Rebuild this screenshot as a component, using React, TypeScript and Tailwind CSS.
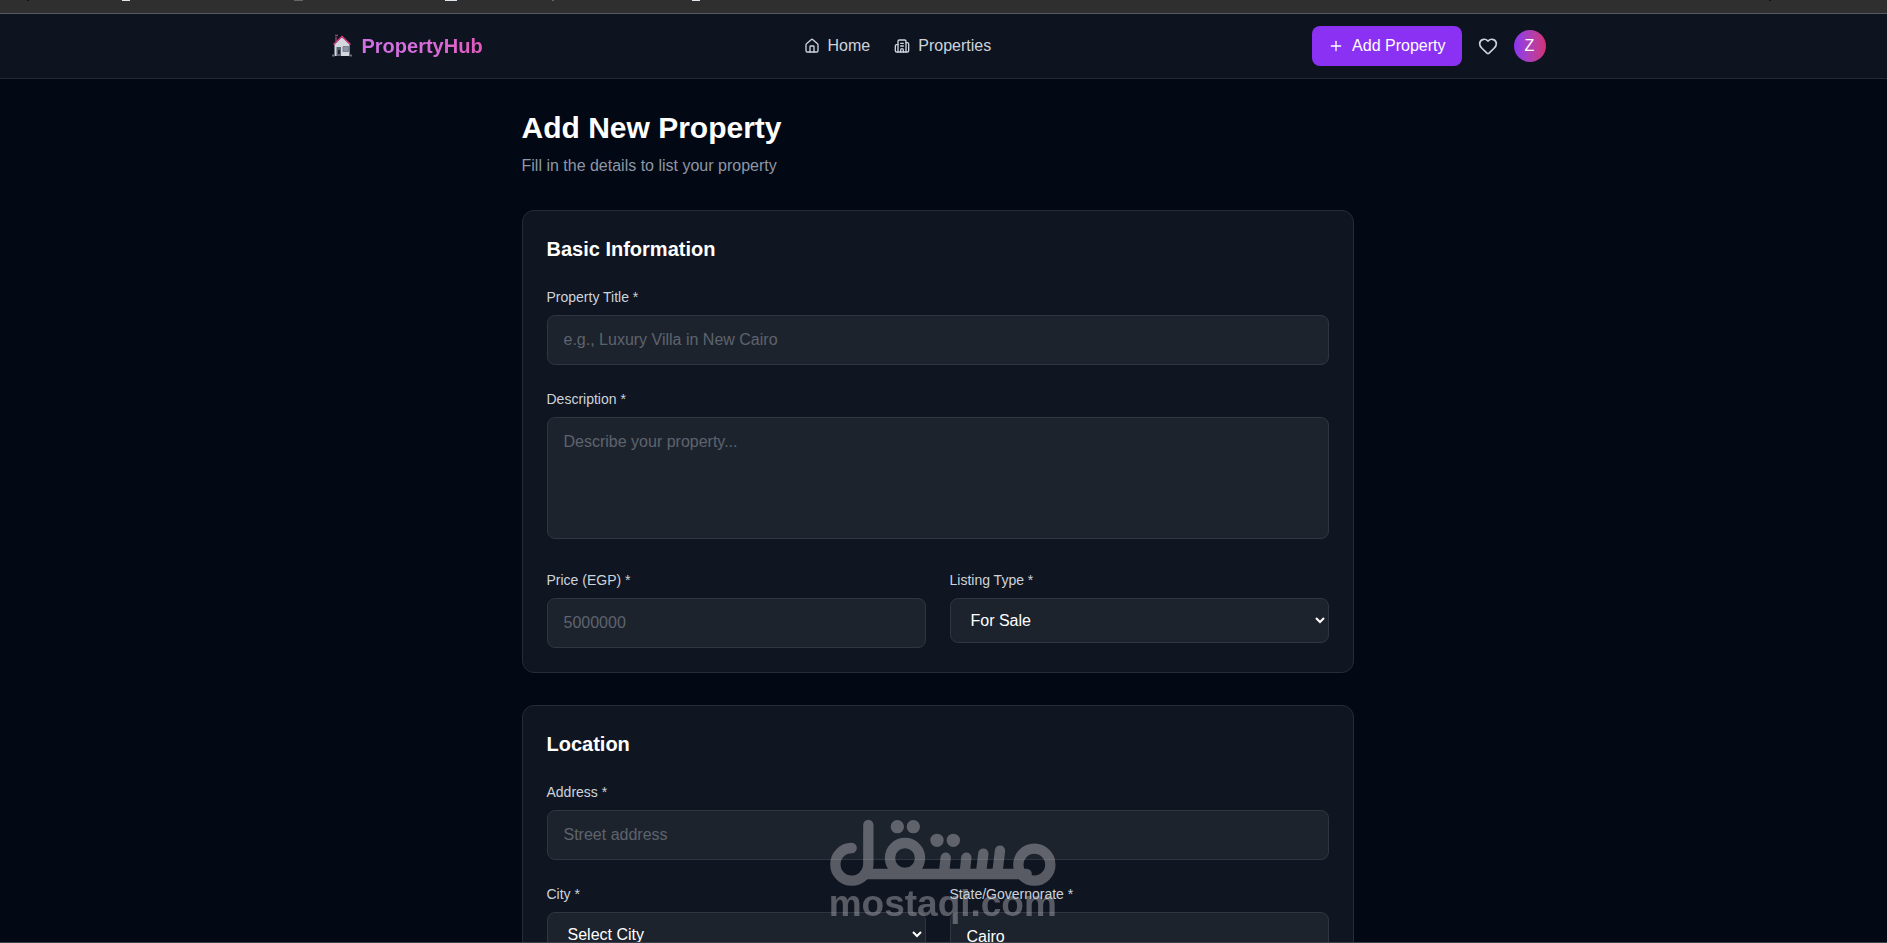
import { Building2, Heart, House, Plus } from "lucide-react";
import type { ReactNode } from "react";

const fieldClass =
  "w-full px-4 py-3 bg-[#1d232d] border border-[#30353f] rounded-lg text-white placeholder:text-[#5d636e] focus:outline-none focus:border-purple-500";

function Field({ id, label, children }: { id: string; label: string; children: ReactNode }) {
  return (
    <div>
      <label htmlFor={id} className="block text-sm text-[#ced3db] mb-2">{label} *</label>
      {children}
    </div>
  );
}

function Section({ title, children }: { title: string; children: ReactNode }) {
  return (
    <section className="bg-[#101621] border border-[#262c36] rounded-xl p-6">
      <h2 className="text-xl font-bold text-white mb-6">{title}</h2>
      <div className="space-y-6">{children}</div>
    </section>
  );
}

function HouseLogo() {
  return (
    <svg viewBox="0 0 24 24" className="w-6 h-6" aria-hidden="true">
      <path d="M5 1.5h3M6 3v4.5" stroke="#8f4c68" strokeWidth="1.4" />
      <path d="M4.5 10.5 12 3l7.5 7.5V22h-15z" fill="#d5d7df" />
      <path d="M3.5 10.5 12 2.5l8.5 8" fill="none" stroke="#d63c80" strokeWidth="1.4" />
      <path d="M6.5 13h4.5v9H6.500z" fill="#5a6070" />
      <path d="M8 16h2v4H8z" fill="#22252e" />
      <path d="M13 12.500h5.500v5H13z" fill="#8b94a5" stroke="#6c7484" strokeWidth="0.8" />
      <path d="M2 21.500h3M19.500 21.500h2.500" stroke="#656c79" strokeWidth="1.8" />
    </svg>
  );
}

function Navbar() {
  return (
    <header className="bg-[#0d1420] border-b border-[#232a35] pr-3">
      <div className="max-w-7xl mx-auto px-8 h-16 flex items-center justify-between">
        <a href="#" className="flex items-center gap-2">
          <HouseLogo />
          <span className="text-xl font-bold bg-gradient-to-r from-[#d070e2] via-[#d86ddc] to-[#e25abb] bg-clip-text text-transparent">
            PropertyHub
          </span>
        </a>
        <nav className="flex items-center gap-6 text-[#ced3db]">
          <a href="#" className="flex items-center gap-2"><House size={16} /> Home</a>
          <a href="#" className="flex items-center gap-2"><Building2 size={16} /> Properties</a>
        </nav>
        <div className="flex items-center gap-4">
          <button type="button" className="flex items-center gap-2 px-4 py-2 rounded-lg bg-[#8b31f3] text-white">
            <Plus size={16} /> Add Property
          </button>
          <a href="#" aria-label="Favorites" className="text-[#ced3db]"><Heart size={20} /></a>
          <button type="button" className="w-8 h-8 rounded-full bg-gradient-to-r from-[#8b31f3] to-[#d22d74] text-white">
            Z
          </button>
        </div>
      </div>
    </header>
  );
}

// bottom edge of the browser toolbar
function BrowserEdge() {
  return (
    <div className="h-[14px] bg-[#2f2f2f] border-b border-[#565a5c]">
      <svg width="1887" height="1" className="block" aria-hidden="true">
        <path d="M27 .5h2M1769 .5h2" stroke="#111" />
        <path d="M122 .5h8M445 .5h12M692 .5h8" stroke="#dfe5ec" />
        <path d="M294 .5h9M552 .5h2" stroke="#666" />
      </svg>
    </div>
  );
}

function Watermark() {
  return (
    <div className="absolute inset-x-0 bottom-[18px] pr-[2px] flex justify-center pointer-events-none opacity-40">
      <svg viewBox="84 85 690 321" width="230" height="107" aria-hidden="true">
        <g fill="none" stroke="#c4c3c8" strokeWidth="31" strokeLinecap="round">
          <path d="M155 175a49 49 0 0 0 0 98a50 50 0 0 0 50-50V106" />
          <path d="M195 253H680" />
          <circle cx="315" cy="205" r="45" />
          <path d="M437 204l-5 46M499 204l-5 46M550 192l-7 58M600 183l-8 67" />
          <circle cx="703" cy="225" r="48" />
        </g>
        <g fill="#c4c3c8">
          <circle cx="292" cy="111" r="20" />
          <circle cx="340" cy="111" r="20" />
          <circle cx="411" cy="152" r="20" />
          <circle cx="460" cy="152" r="20" />
          <text x="86" y="379" fontSize="111" className="font-['Liberation_Sans',Arial,sans-serif] font-bold">mostaql.com</text>
        </g>
      </svg>
    </div>
  );
}

export default function App() {
  return (
    <div className="relative h-screen overflow-hidden bg-[#020814] font-['Liberation_Sans',Arial,sans-serif]">
      <BrowserEdge />
      <Navbar />
      <main className="pr-3">
        <div className="max-w-4xl mx-auto px-8 pt-[31px] pb-8">
          <h1 className="text-3xl font-bold text-white mb-2">Add New Property</h1>
          <p className="text-[#8f97a5] mb-8">Fill in the details to list your property</p>

          <form className="space-y-8">
            <Section title="Basic Information">
              <Field id="title" label="Property Title">
                <input id="title" type="text" placeholder="e.g., Luxury Villa in New Cairo" className={fieldClass} />
              </Field>
              <Field id="description" label="Description">
                <textarea id="description" rows={4} placeholder="Describe your property..." className={`${fieldClass} resize-none align-baseline`} />
              </Field>
              <div className="grid grid-cols-2 gap-6">
                <Field id="price" label="Price (EGP)">
                  <input id="price" type="text" inputMode="numeric" placeholder="5000000" className={fieldClass} />
                </Field>
                <Field id="listing" label="Listing Type">
                  <select id="listing" className={fieldClass}>
                    <option>For Sale</option>
                    <option>For Rent</option>
                  </select>
                </Field>
              </div>
            </Section>

            <Section title="Location">
              <Field id="address" label="Address">
                <input id="address" type="text" placeholder="Street address" className={fieldClass} />
              </Field>
              <div className="grid grid-cols-2 gap-6">
                <Field id="city" label="City">
                  <select id="city" className={fieldClass}>
                    <option>Select City</option>
                  </select>
                </Field>
                <Field id="state" label="State/Governorate">
                  <input id="state" type="text" defaultValue="Cairo" className={fieldClass} />
                </Field>
              </div>
            </Section>
          </form>
        </div>
      </main>
      <Watermark />
      <div className="absolute inset-x-0 bottom-0 h-px bg-[#3a404a]" />
    </div>
  );
}
